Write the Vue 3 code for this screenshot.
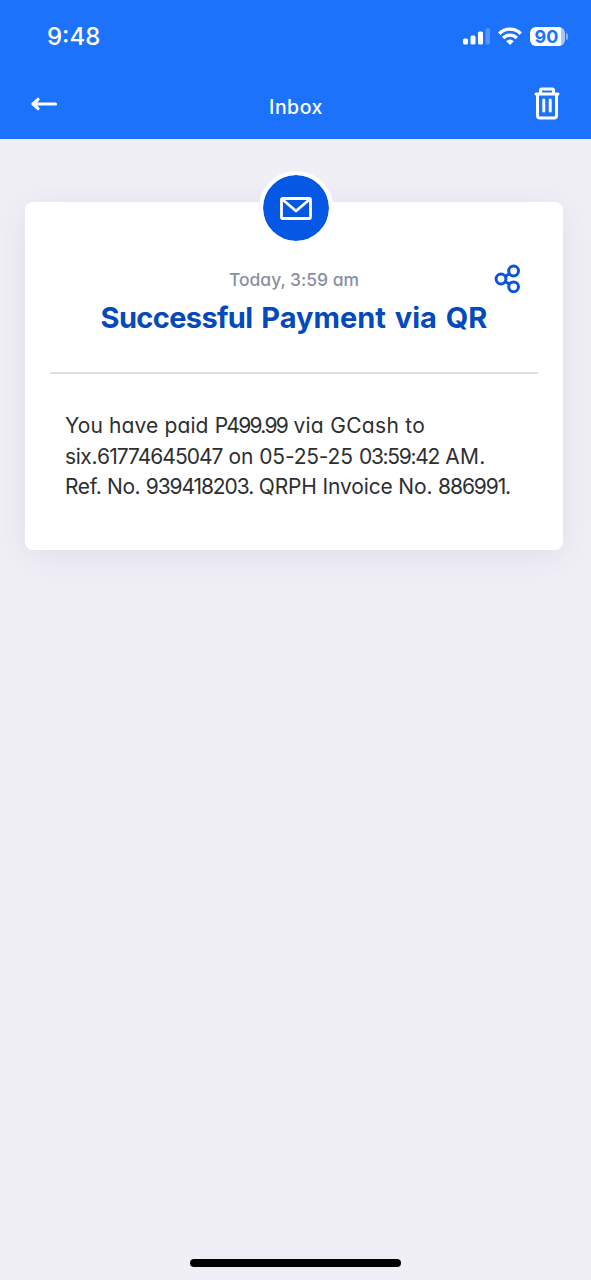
<script setup>
const lines = [
  [
    { text: 'You have paid ', k: 'wide' },
    { text: 'P499.99', k: 'amount' },
    { text: ' via GCash to', k: 'loose' },
  ],
  [
    { text: 'six.', k: 'snug' },
    { text: '61774645047', k: 'figures' },
    { text: ' on ', k: 'plain' },
    { text: '05-25-25', k: 'day' },
    { text: ' ', k: 'loose' },
    { text: '03:59:42', k: 'clock' },
    { text: ' AM.', k: 'loose' },
  ],
  [
    { text: 'Ref. No. ', k: 'snug' },
    { text: '939418203.', k: 'ref' },
    { text: ' QRPH Invoice No. ', k: 'words' },
    { text: '886991.', k: 'ref' },
  ],
]
</script>

<template>
  <div class="screen">
    <header class="header">
      <div class="status">
        <span class="time">9:48</span>
        <div class="indicators">
          <svg class="signal" width="28" height="18" viewBox="0 0 28 18" fill="#fff">
            <rect x="0" y="11.5" width="5" height="6" rx="1.5" />
            <rect x="7.5" y="8.5" width="5" height="9" rx="1.5" />
            <rect x="15" y="4.5" width="5" height="13" rx="1.5" />
            <rect x="22.5" y="1.2" width="4.5" height="16.3" rx="1.5" opacity=".25" />
          </svg>
          <svg class="wifi" width="24" height="18" viewBox="0 0 24 18" fill="none" stroke="#fff" stroke-width="3.4">
            <path d="M1.3 6.7C7.2 .6 16.8 .6 22.7 6.7" />
            <path d="M5.2 11C9 7.2 15 7.2 18.8 11" />
            <path d="M8.2 14.2Q12 11 15.8 14.2L12 18Z" fill="#fff" stroke="none" />
          </svg>
          <div class="battery"><span class="level">90</span><i class="cap"></i></div>
        </div>
      </div>
      <nav class="nav">
        <svg class="back" width="28" height="14" viewBox="0 0 28 14" fill="none" stroke="#fff" stroke-width="3.2" stroke-linecap="round" stroke-linejoin="round">
          <path d="M3 7H25.5M8 2.3L3 7L8 11.7" />
        </svg>
        <span class="nav-title">Inbox</span>
        <svg class="trash" width="26" height="33" viewBox="0 0 26 33" fill="none" stroke="#fff" stroke-width="3" stroke-linecap="round" stroke-linejoin="round">
          <path d="M2 7H24M6.5 7V3.3Q6.5 2 7.8 2H18.2Q19.5 2 19.5 3.3V7M3.5 7V28.5Q3.5 31 6 31H20Q22.5 31 22.5 28.5V7" />
          <path d="M9.8 13V24M16.2 13V24" />
        </svg>
      </nav>
    </header>

    <main class="card">
      <div class="badge">
        <svg width="32" height="23" viewBox="0 0 32 23" fill="none" stroke="#fff" stroke-width="2.8" stroke-linejoin="round">
          <rect x="1.5" y="1.5" width="29" height="20" rx="1" />
          <path d="M2.5 2.5L16 14L29.5 2.5" />
        </svg>
      </div>
      <svg class="share" width="28" height="30" viewBox="0 0 28 30" fill="none" stroke="#0b55dc" stroke-width="3">
        <circle cx="7" cy="15" r="4.9" />
        <circle cx="19.6" cy="7" r="4.9" />
        <circle cx="19.6" cy="22.8" r="4.9" />
        <path d="M11.1 12.4L15.5 9.6M11.1 17.4L15.5 20.2" />
      </svg>
      <p class="date">Today, 3:59 am</p>
      <h1 class="title"><span class="first">Successful</span> Payment via QR</h1>
      <hr class="rule" />
      <p class="body">
        <span v-for="(line, i) in lines" :key="i" class="line"><span v-for="(p, j) in line" :key="j" :class="p.k">{{ p.text }}</span></span>
      </p>
    </main>

    <div class="home"></div>
  </div>
</template>

<style>
body { margin: 0; }
</style>

<style scoped>
.screen {
  box-sizing: border-box;
  width: 591px;
  height: 1280px;
  display: flex;
  flex-direction: column;
  background: #f0eff6;
  font-family: Inter, "Liberation Sans", sans-serif;
  overflow: hidden;
}
.header { height: 139px; background: #1c72fa; color: #fff; flex: none; }
.status {
  height: 72px;
  display: flex;
  align-items: center;
  justify-content: space-between;
  padding: 0 23px 0 47px;
}
.time { font-size: 24px; line-height: 30px; font-weight: 500; letter-spacing: 0; padding-top: 1px; }
.indicators { display: flex; align-items: center; }
.wifi { margin: 0 8px 0 7px; }
.battery { display: flex; align-items: center; gap: 1px; }
.level {
  width: 35px;
  height: 19px;
  border-radius: 6px;
  background: linear-gradient(90deg, #fff 31px, #a4c7fd 31px);
  color: #1c72fa;
  font-size: 18px;
  line-height: 19.5px;
  font-weight: 650;
  text-align: center;
  text-indent: -2px;
}
.cap { width: 2px; height: 7px; border-radius: 0 2px 2px 0; background: #83b2fc; }
.nav {
  height: 67px;
  display: grid;
  grid-template-columns: 60px 1fr 60px;
  box-sizing: border-box;
  padding: 0 31px 0 30px;
}
.back { margin-top: 25px; }
.nav-title {
  justify-self: center;
  margin: 22px 0 0 2px;
  font-size: 19.5px;
  line-height: 26px;
  font-weight: 500;
  letter-spacing: 0.5px;
}
.trash { justify-self: end; margin-top: 15px; }
.card {
  position: relative;
  box-sizing: border-box;
  width: 538px;
  height: 348px;
  margin: 63px 0 0 25px;
  padding: 66px 25px 0;
  background: #fff;
  border-radius: 8px;
  box-shadow: 0 6px 34px rgba(60, 70, 110, 0.09);
}
.badge {
  position: absolute;
  left: 234px;
  top: -31px;
  width: 66px;
  height: 66px;
  border: 4px solid #fff;
  border-radius: 50%;
  background: #0558e4;
  background-clip: padding-box;
  display: flex;
  align-items: center;
  justify-content: center;
}
.share { position: absolute; left: 469px; top: 62px; }
.date {
  margin: 0;
  text-align: center;
  font-size: 17.5px;
  line-height: 24px;
  font-weight: 500;
  letter-spacing: -0.05px;
  color: #8890a3;
  font-feature-settings: "cv11";
}
.title {
  margin: 8px 0 0;
  text-align: center;
  font-size: 29px;
  line-height: 36px;
  font-weight: 700;
  color: #044abb;
  white-space: nowrap;
  word-spacing: 2px;
}
.first { letter-spacing: -0.65px; }
.rule { margin: 36px 0 0; border: 0; height: 2px; background: #dde0e4; }
.body {
  margin: 37px 0 0 15px;
  color: #2d2f31;
  font-size: 21px;
  line-height: 30.5px;
  font-feature-settings: "cv11";
}
.line { display: block; white-space: pre; width: max-content; }
.wide { letter-spacing: 0.12px; }
.loose { letter-spacing: 0.3px; }
.plain { letter-spacing: 0; }
.snug { letter-spacing: -0.4px; }
.amount { letter-spacing: -1.7px; }
.figures { letter-spacing: -0.98px; }
.day { letter-spacing: -0.2px; }
.words { letter-spacing: -0.15px; }
.clock { letter-spacing: -1.3px; }
.ref { letter-spacing: -1.1px; }
.home {
  width: 211px;
  height: 8px;
  border-radius: 4px;
  background: #000;
  margin: auto 0 13px 190px;
}
</style>
